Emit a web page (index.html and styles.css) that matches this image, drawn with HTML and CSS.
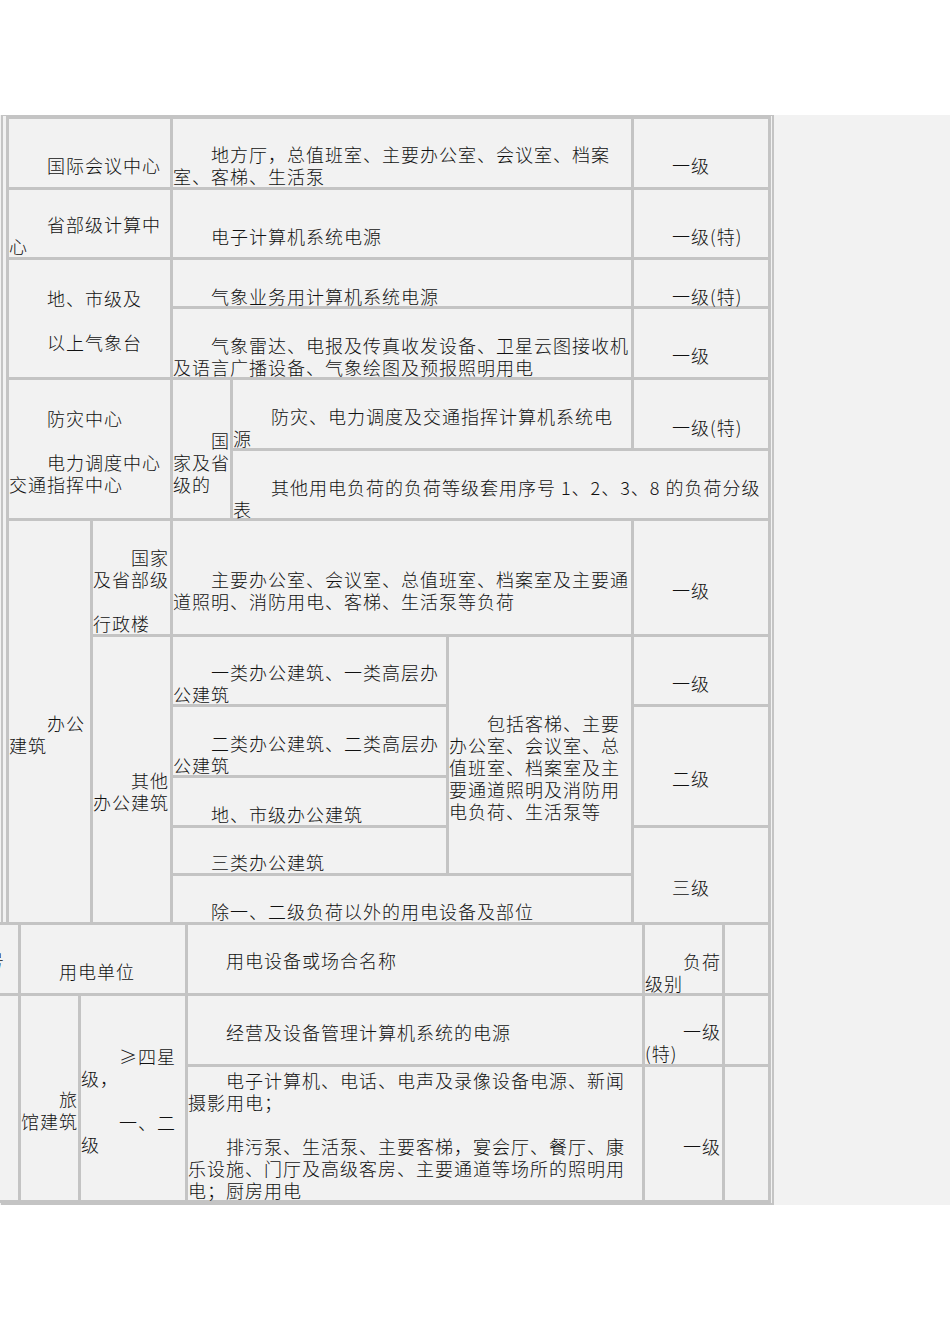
FILE: index.html
```html
<!DOCTYPE html>
<html lang="zh-CN">
<head>
<meta charset="utf-8">
<title>用电负荷分级表</title>
<link rel="stylesheet" href="styles.css">
</head>
<body>
<div class="top"></div>
<div class="sheet">
  <div class="frame">
    <table class="t1">
      <colgroup><col class="c81"><col class="c77"><col class="c57"><col class="c213"><col class="c182"><col class="c134"></colgroup>
      <tr class="h68">
        <td colspan="2" class="p35"><div class="in">国际会议中心</div></td>
        <td colspan="3" class="p24"><div class="in">地方厅，总值班室、主要办公室、会议室、档案<br>室、客梯、生活泵</div></td>
        <td class="p35"><div class="in">一级</div></td>
      </tr>
      <tr class="h67">
        <td colspan="2" class="p23"><div class="in">省部级计算中<br>心</div></td>
        <td colspan="3" class="p35"><div class="in">电子计算机系统电源</div></td>
        <td class="p35"><div class="in">一级(特)</div></td>
      </tr>
      <tr class="h46">
        <td colspan="2" rowspan="2" class="p27"><div class="in"><div>地、市级及</div><div class="gap"></div><div>以上气象台</div></div></td>
        <td colspan="3" class="p25"><div class="in">气象业务用计算机系统电源</div></td>
        <td class="p25"><div class="in">一级(特)</div></td>
      </tr>
      <tr class="h68">
        <td colspan="3" class="p25"><div class="in">气象雷达、电报及传真收发设备、卫星云图接收机<br>及语言广播设备、气象绘图及预报照明用电</div></td>
        <td class="p35"><div class="in">一级</div></td>
      </tr>
      <tr class="h68">
        <td colspan="2" rowspan="2" class="p27"><div class="in"><div>防灾中心</div><div class="gap"></div><div>电力调度中心<br>交通指挥中心</div></div></td>
        <td rowspan="2" class="p49"><div class="in">国<br>家及省<br>级的</div></td>
        <td colspan="2" class="p25"><div class="in">防灾、电力调度及交通指挥计算机系统电<br>源</div></td>
        <td class="p36"><div class="in">一级(特)</div></td>
      </tr>
      <tr class="h67">
        <td colspan="3" class="p25"><div class="in">其他用电负荷的负荷等级套用序号 1、2、3、8 的负荷分级<br>表</div></td>
      </tr>
      <tr class="h113">
        <td rowspan="6" class="p191"><div class="in">办公<br>建筑</div></td>
        <td class="p25"><div class="in"><div>国家<br>及省部级</div><div class="gap"></div><div class="ni">行政楼</div></div></td>
        <td colspan="3" class="p47"><div class="in">主要办公室、会议室、总值班室、档案室及主要通<br>道照明、消防用电、客梯、生活泵等负荷</div></td>
        <td class="p58"><div class="in">一级</div></td>
      </tr>
      <tr class="h67">
        <td rowspan="5" class="p132"><div class="in">其他<br>办公建筑</div></td>
        <td colspan="2" class="p24"><div class="in">一类办公建筑、一类高层办<br>公建筑</div></td>
        <td rowspan="4" class="p75"><div class="in">包括客梯、主要<br>办公室、会议室、总<br>值班室、档案室及主<br>要通道照明及消防用<br>电负荷、生活泵等</div></td>
        <td class="p35"><div class="in">一级</div></td>
      </tr>
      <tr class="h68">
        <td colspan="2" class="p25"><div class="in">二类办公建筑、二类高层办<br>公建筑</div></td>
        <td rowspan="2" class="p60"><div class="in">二级</div></td>
      </tr>
      <tr class="h47">
        <td colspan="2" class="p25"><div class="in">地、市级办公建筑</div></td>
      </tr>
      <tr class="h45">
        <td colspan="2" class="p23"><div class="in">三类办公建筑</div></td>
        <td rowspan="2" class="p48"><div class="in">三级</div></td>
      </tr>
      <tr class="h46">
        <td colspan="3" class="p24"><div class="in">除一、二级负荷以外的用电设备及部位</div></td>
      </tr>
    </table>
    <table class="t2">
      <colgroup><col class="c60"><col class="c57"><col class="c104"><col class="c454"><col class="c77"><col class="c43"></colgroup>
      <tr class="h68">
        <td class="sn p24"><div class="in">序号</div></td>
        <td colspan="2" class="p35"><div class="in">用电单位</div></td>
        <td class="p24"><div class="in">用电设备或场合名称</div></td>
        <td class="p25"><div class="in">负荷<br>级别</div></td>
        <td></td>
      </tr>
      <tr class="h68">
        <td rowspan="2"></td>
        <td rowspan="2" class="p92"><div class="in">旅<br>馆建筑</div></td>
        <td rowspan="2" class="p49"><div class="in"><div>≥四星<br>级，</div><div class="gap"></div><div>一、二<br>级</div></div></td>
        <td class="p25"><div class="in">经营及设备管理计算机系统的电源</div></td>
        <td class="p24"><div class="in">一级<br>(特)</div></td>
        <td></td>
      </tr>
      <tr class="h133">
        <td class="p2"><div class="in"><div>电子计算机、电话、电声及录像设备电源、新闻<br>摄影用电；</div><div class="gap"></div><div>排污泵、生活泵、主要客梯，宴会厅、餐厅、康<br>乐设施、门厅及高级客房、主要通道等场所的照明用<br>电；厨房用电</div></div></td>
        <td class="p68"><div class="in">一级</div></td>
        <td></td>
      </tr>
    </table>
  </div>
</div>
</body>
</html>
```

FILE: styles.css
```css
html, body {
  margin: 0;
  background: #ffffff;
}
body {
  font-family: "Noto Sans CJK SC", sans-serif;
  color: #111111;
}
.top {
  height: 115px;
}
.sheet {
  background: #f2f2f2;
}
.frame {
  width: 765px;
  margin-left: 1px;
  border: 2px solid #c4c4c4;
  border-top-width: 1px;
  padding: 0 1px 0 3px;
}
table {
  border-collapse: separate;
  border-spacing: 3px;
  background: #c4c4c4;
  table-layout: fixed;
}
.t1 {
  width: 765px;
}
.t2 {
  width: 816px;
  margin-left: -51px;
  margin-top: -3px;
}
td {
  background: #f2f2f2;
  padding: 0;
  vertical-align: top;
  text-indent: 38px;
  white-space: nowrap;
  font-size: 18px;
  font-weight: 300;
  letter-spacing: 1px;
  line-height: 22px;
}
.in {
  margin-bottom: -40px;
}
.gap {
  height: 22px;
}
.ni {
  text-indent: 0;
}
.sn {
  text-align: right;
  text-indent: 0;
  padding-right: 13px;
}

.c43 { width: 43px; }
.c57 { width: 57px; }
.c60 { width: 60px; }
.c77 { width: 77px; }
.c81 { width: 81px; }
.c104 { width: 104px; }
.c134 { width: 134px; }
.c182 { width: 182px; }
.c213 { width: 213px; }
.c454 { width: 454px; }

.h45 { height: 45px; }
.h46 { height: 46px; }
.h47 { height: 47px; }
.h67 { height: 67px; }
.h68 { height: 68px; }
.h113 { height: 113px; }
.h133 { height: 133px; }

.p2 { padding-top: 2px; }
.p23 { padding-top: 23px; }
.p24 { padding-top: 24px; }
.p25 { padding-top: 25px; }
.p27 { padding-top: 27px; }
.p35 { padding-top: 35px; }
.p36 { padding-top: 36px; }
.p47 { padding-top: 47px; }
.p48 { padding-top: 48px; }
.p49 { padding-top: 49px; }
.p58 { padding-top: 58px; }
.p60 { padding-top: 60px; }
.p68 { padding-top: 68px; }
.p75 { padding-top: 75px; }
.p92 { padding-top: 92px; }
.p132 { padding-top: 132px; }
.p191 { padding-top: 191px; }
```
